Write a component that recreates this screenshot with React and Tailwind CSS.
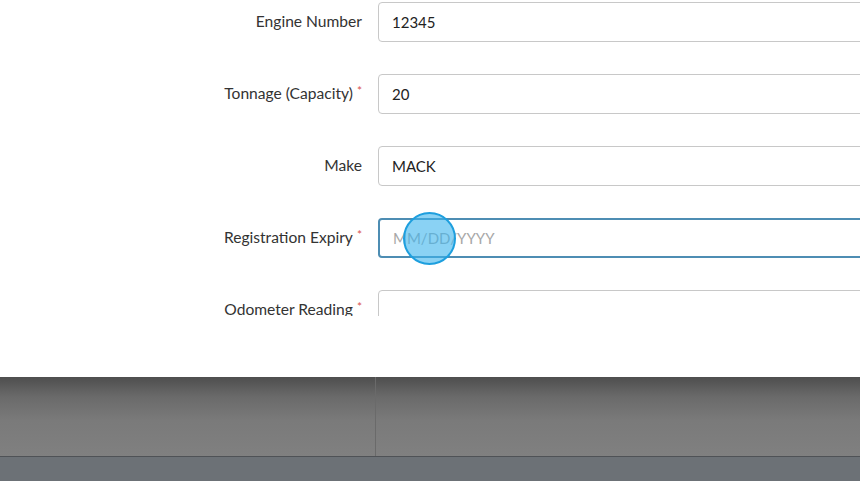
import React from "react";

const rows = [
  { label: "Engine Number", value: "12345", req: false },
  { label: "Tonnage (Capacity)", value: "20", req: true },
  { label: "Make", value: "MACK", req: false },
  { label: "Registration Expiry", value: "", placeholder: "MM/DD/YYYY", req: true, focus: true },
  { label: "Odometer Reading", value: "", req: true },
];

export default function App() {
  return (
    <div className="w-[860px] h-[481px] flex flex-col overflow-hidden" style={{ fontFamily: "Lato, 'Open Sans', sans-serif" }}>
      <div className="h-[377px] bg-white shrink-0">
        <div className="h-[316px] overflow-hidden pt-[2px] flex flex-col gap-[32px]">
          {rows.map((r) => (
            <div key={r.label} className="flex items-center shrink-0 h-[40px]">
              <div className="w-[362px] shrink-0 text-right text-[15.6px] text-[#333] flex justify-end items-center">
                <span>{r.label}</span>
                {r.req && <span className="text-[#d9534f] text-[12px] ml-[4px] -mt-[6px]">*</span>}
              </div>
              <div className="ml-[16px] w-[520px] shrink-0 relative">
                <div
                  className={
                    "h-[40px] w-[520px] rounded-[4px] flex items-center text-[15px] " +
                    (r.focus ? "border-2 border-[#4d8db3] pl-[13px]" : "border border-[#c8c8c8] pl-[13px]")
                  }
                >
                  {r.value ? (
                    <span className="text-[#222]">{r.value}</span>
                  ) : (
                    <span className="text-[#a8a8a8]">{r.placeholder || ""}</span>
                  )}
                </div>
                {r.focus && (
                  <div className="absolute left-[25px] top-[-6px] w-[53px] h-[53px] rounded-full bg-[#3cb4ec]/60 border-2 border-[#1e9fde]" />
                )}
              </div>
            </div>
          ))}
        </div>
      </div>
      <div className="h-[79px] shrink-0 flex bg-[linear-gradient(to_bottom,#4e4e4e_0%,#6a6a6a_25%,#7a7a7a_55%,#808080_100%)]">
        <div className="w-[376px] border-r border-[#6a6a6a]" />
        <div className="flex-1" />
      </div>
      <div className="h-[1px] bg-[#4f5256] shrink-0" />
      <div className="flex-1 bg-[#6c7176]" />
    </div>
  );
}
